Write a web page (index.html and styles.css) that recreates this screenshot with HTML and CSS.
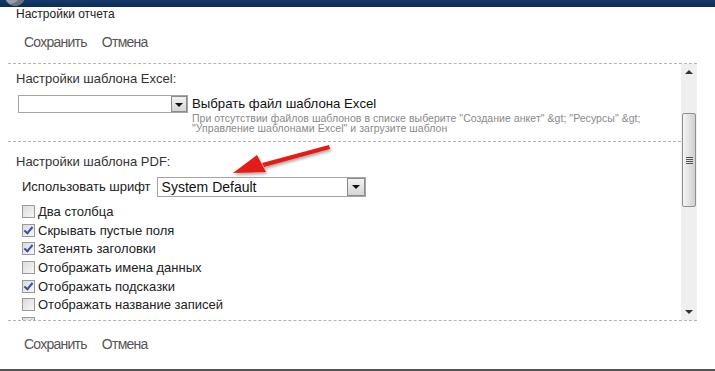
FILE: index.html
```html
<!DOCTYPE html>
<html>
<head>
<meta charset="utf-8">
<link rel="stylesheet" href="styles.css">
</head>
<body>
<div class="topbar"><div class="logo"></div></div>
<div class="title">Настройки отчета</div>
<div class="toolbar"><span>Сохранить</span><span>Отмена</span></div>
<div class="panel">
  <div class="content">
    <div class="section">
      <div class="heading">Настройки шаблона Excel:</div>
      <div class="excel-row">
        <div class="select sel-excel"><div class="sel-text"></div><div class="sel-btn"><span class="tri"></span></div></div>
        <div class="excel-info">
          <div class="excel-label">Выбрать файл шаблона Excel</div>
          <div class="hint">При отсутствии файлов шаблонов в списке выберите "Создание анкет" &amp;gt; "Ресурсы" &amp;gt;<br>"Управление шаблонами Excel" и загрузите шаблон</div>
        </div>
      </div>
    </div>
    <div class="section pdf">
      <div class="heading">Настройки шаблона PDF:</div>
      <div class="font-row">
        <span class="font-label">Использовать шрифт</span>
        <div class="select sel-font"><div class="sel-text">System Default</div><div class="sel-btn"><span class="tri"></span></div></div>
      </div>
      <div class="checks">
        <label class="check"><span class="box"></span>Два столбца</label>
        <label class="check"><span class="box on"></span>Скрывать пустые поля</label>
        <label class="check"><span class="box on"></span>Затенять заголовки</label>
        <label class="check"><span class="box"></span>Отображать имена данных</label>
        <label class="check"><span class="box on"></span>Отображать подсказки</label>
        <label class="check"><span class="box"></span>Отображать название записей</label>
        <div class="check"><span class="box on"></span></div>
      </div>
    </div>
  </div>
  <div class="scrollbar">
    <div class="sb-arrow up"></div>
    <div class="sb-track"><div class="sb-thumb"><span class="grip"></span></div></div>
    <div class="sb-arrow down"></div>
  </div>
</div>
<div class="toolbar bottom"><span>Сохранить</span><span>Отмена</span></div>
<div class="footer-line"></div>
<svg class="arrow" width="715" height="371" viewBox="0 0 715 371">
  <defs>
    <filter id="sh" x="-20%" y="-50%" width="140%" height="200%">
      <feGaussianBlur in="SourceAlpha" stdDeviation="1.5"/>
      <feOffset dx="1" dy="2"/>
      <feComponentTransfer><feFuncA type="linear" slope="0.35"/></feComponentTransfer>
      <feMerge><feMergeNode/><feMergeNode in="SourceGraphic"/></feMerge>
    </filter>
  </defs>
  <g filter="url(#sh)">
    <path d="M329 145 L262 163 L264 167 L330 149 Z" fill="#e41b17"/>
    <path d="M233 173 L257 155 L266 172 Z" fill="#e41b17"/>
  </g>
</svg>
</body>
</html>
```
FILE: styles.css
```css
html, body { margin: 0; padding: 0; background: #fff; }
body {
  width: 715px; height: 371px; overflow: hidden; position: relative;
  font-family: "Liberation Sans", Arial, sans-serif; color: #222;
}
.topbar {
  height: 7px; background: linear-gradient(#143a6c, #0d2a55);
  position: relative; overflow: hidden;
}
.logo {
  position: absolute; left: 5px; top: -14px; width: 20px; height: 20px;
  border-radius: 50%; background: #9a9ea6;
  box-shadow: inset -5px -2px 0 #6d727b;
}
.title { font-size: 12px; line-height: 14px; padding: 0 0 0 16px; color: #222; height: 14px; }
.toolbar {
  display: flex; gap: 15px; padding-left: 24px; height: 42px; align-items: center;
  font-size: 14px; color: #555; letter-spacing: -0.75px;
}
.toolbar.bottom { height: 46px; }
.panel {
  margin-left: 8px; width: 689px; height: 256px;
  border-top: 1px dashed #b4b4b4; border-bottom: 1px dashed #b4b4b4;
  display: flex;
}
.content { flex: 1; overflow: hidden; }
.section { padding: 0 0 0 8px; }
.heading { font-size: 13px; line-height: 15px; color: #333; padding-top: 7px; height: 24px; }
.excel-row { display: flex; align-items: flex-start; padding-left: 2px; }
.select {
  height: 18px; border: 1px solid #a5a5a5; box-sizing: border-box; display: flex; background: #fff;
}
.sel-excel { width: 170px; margin-top: 0; }
.sel-text { flex: 1; font-size: 14px; line-height: 17px; padding-left: 4px; color: #111; }
.sel-btn {
  width: 16px; height: 16px; background: linear-gradient(#f2f2f2, #d6d6d6);
  display: flex; align-items: center; justify-content: center; box-sizing: border-box;
  border: 1px solid #8b8b8b;
}
.tri { width: 0; height: 0; border-left: 4px solid transparent; border-right: 4px solid transparent; border-top: 4px solid #111; margin-top: 1px; }
.excel-info { padding-left: 4px; }
.excel-label { font-size: 13.2px; line-height: 18px; color: #111; }
.hint { font-size: 10.5px; line-height: 10.5px; color: #8a8a8a; margin-top: -0.5px; letter-spacing: 0.05px; }
.pdf { border-top: 1px dashed #b4b4b4; margin-top: 7px; padding-top: 8px; }
.pdf .heading { padding-top: 4px; height: 23px; }
.font-row { display: flex; align-items: center; padding-left: 6px; height: 20px; gap: 6px; }
.font-label { font-size: 13px; color: #222; }
.sel-font { width: 209px; height: 20px; }
.sel-font .sel-text { line-height: 18px; }
.sel-font .sel-btn { width: 18px; height: 18px; }
.checks { padding-left: 6px; padding-top: 6px; }
.check { display: flex; align-items: center; height: 18.6px; font-size: 13px; color: #222; }
.box {
  width: 11px; height: 11px; border: 1px solid #9a9a9a; background: linear-gradient(135deg, #dcdcdc, #f6f6f6);
  margin-right: 3px; position: relative; flex: none;
}
.box.on::after {
  content: ""; position: absolute; left: 3px; top: 0px; width: 3px; height: 7px;
  border-right: 2px solid #3a4ea8; border-bottom: 2px solid #3a4ea8; transform: rotate(40deg);
}
.scrollbar { width: 16px; background: #efefef; display: flex; flex-direction: column; }
.sb-arrow { height: 16px; display: flex; align-items: center; justify-content: center; }
.sb-arrow::after { content: ""; width: 0; height: 0; border-left: 4px solid transparent; border-right: 4px solid transparent; }
.sb-arrow.up::after { border-bottom: 4px solid #333; }
.sb-arrow.down::after { border-top: 4px solid #333; }
.sb-track { flex: 1; padding-top: 33px; }
.sb-thumb {
  margin: 0 1px; height: 92px; border: 1px solid #8f8f8f; border-radius: 2px;
  background: linear-gradient(90deg, #f4f4f4, #e6e6e6 40%, #cfcfcf); display: flex; align-items: center; justify-content: center;
}
.grip { width: 7px; height: 7px; background: repeating-linear-gradient(#555 0 1px, transparent 1px 2px); }
.footer-line { position: absolute; left: 0; bottom: 0; width: 715px; height: 2px; background: #555; }
.arrow { position: absolute; left: 0; top: 0; pointer-events: none; }
```
